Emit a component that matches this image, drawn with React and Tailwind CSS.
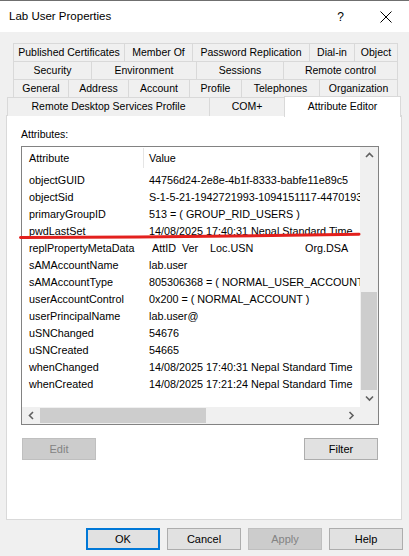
import React from 'react';

const rows = [
  ['objectGUID', '44756d24-2e8e-4b1f-8333-babfe11e89c5'],
  ['objectSid', 'S-1-5-21-1942721993-1094151117-4470193'],
  ['primaryGroupID', '513 = ( GROUP_RID_USERS )'],
  ['pwdLastSet', '14/08/2025 17:40:31 Nepal Standard Time'],
  ['replPropertyMetaData', 'META'],
  ['sAMAccountName', 'lab.user'],
  ['sAMAccountType', '805306368 = ( NORMAL_USER_ACCOUNT )'],
  ['userAccountControl', '0x200 = ( NORMAL_ACCOUNT )'],
  ['userPrincipalName', 'lab.user@'],
  ['uSNChanged', '54676'],
  ['uSNCreated', '54665'],
  ['whenChanged', '14/08/2025 17:40:31 Nepal Standard Time'],
  ['whenCreated', '14/08/2025 17:21:24 Nepal Standard Time'],
];

const Tab = ({ className, children }) => (
  <div className={`h-[19px] -ml-px first:ml-0 border border-[#d9d9d9] bg-[#f0f0f0] flex items-center justify-center text-[10.5px] text-black whitespace-nowrap ${className}`}>
    {children}
  </div>
);

const Chevron = ({ dir }) => {
  const pts = {
    up: '1,5 4.5,1.5 8,5',
    down: '1,1.5 4.5,5 8,1.5',
    left: '5,1 1.5,4.5 5,8',
    right: '1.5,1 5,4.5 1.5,8',
  }[dir];
  const vertical = dir === 'up' || dir === 'down';
  return (
    <svg width={vertical ? 9 : 7} height={vertical ? 7 : 9} viewBox={vertical ? '0 0 9 7' : '0 0 7 9'}>
      <polyline points={pts} fill="none" stroke="#606060" strokeWidth="1.6" />
    </svg>
  );
};

const Button = ({ className, children }) => (
  <div className={`w-[74px] h-[22px] flex items-center justify-center text-[11px] ${className}`}>{children}</div>
);

export default function App() {
  return (
    <div className="relative w-[409px] h-[556px] bg-[#f0f0f0] font-['Liberation_Sans',Arial,sans-serif] text-black overflow-hidden select-none">
      {/* title bar */}
      <div className="h-[32px] bg-white border-t border-[#6f6f6f] flex items-center pl-[9px]">
        <span className="text-[11.5px] flex-1">Lab User Properties</span>
        <span className="text-[12px] mr-[36px]">?</span>
        <svg width="12" height="12" viewBox="0 0 12 12" className="mr-[17px]">
          <path d="M0.5 0.5 L11.5 11.5 M11.5 0.5 L0.5 11.5" stroke="#000" strokeWidth="1" />
        </svg>
      </div>

      {/* tabs */}
      <div className="mt-[11px]">
        <div className="flex ml-[13px]">
          <Tab className="w-[112px]">Published Certificates</Tab>
          <Tab className="w-[69px]">Member Of</Tab>
          <Tab className="w-[118px]">Password Replication</Tab>
          <Tab className="w-[46px]">Dial-in</Tab>
          <Tab className="w-[44px]">Object</Tab>
        </div>
        <div className="flex ml-[13px] -mt-px">
          <Tab className="w-[79px]">Security</Tab>
          <Tab className="w-[106px]">Environment</Tab>
          <Tab className="w-[88px]">Sessions</Tab>
          <Tab className="w-[115px]">Remote control</Tab>
        </div>
        <div className="flex ml-[13px] -mt-px">
          <Tab className="w-[56px]">General</Tab>
          <Tab className="w-[61px]">Address</Tab>
          <Tab className="w-[62px]">Account</Tab>
          <Tab className="w-[53px]">Profile</Tab>
          <Tab className="w-[79px]">Telephones</Tab>
          <Tab className="w-[79px]">Organization</Tab>
        </div>
        <div className="flex items-end ml-[7px] -mt-px h-[19px] relative z-10">
          <Tab className="w-[203px] h-[18px] border-b-0">Remote Desktop Services Profile</Tab>
          <Tab className="w-[76px] h-[18px] border-b-0">COM+</Tab>
          <div className="w-[117px] h-[21px] -ml-px -mb-px border border-b-0 border-[#d9d9d9] bg-white flex items-start justify-center pt-[2px] text-[10.5px] whitespace-nowrap">
            Attribute Editor
          </div>
        </div>
      </div>

      {/* panel */}
      <div className="ml-[6px] w-[396px] h-[405px] -mt-px bg-white border border-[#d9d9d9] pl-[14px] pt-[11px]">
        <div className="h-[14px] leading-[14px] text-[10.5px]">Attributes:</div>

        <div className="mt-[5px] w-[358px] h-[279px] border border-[#828282]">
          <div className="flex h-[260px]">
            <div className="w-[338px] bg-white overflow-hidden text-[10.8px] whitespace-nowrap">
              <div className="flex h-[22px] items-center">
                <div className="w-[122px] h-[20px] pl-[7px] flex items-center border-r border-[#e5e5e5]">Attribute</div>
                <div className="pl-[5px]">Value</div>
              </div>
              <div className="pt-[3px]">
                {rows.map(([name, value]) => (
                  <div key={name} className="flex h-[17px] items-center">
                    <div className="w-[122px] shrink-0 pl-[7px]">{name}</div>
                    {value === 'META' ? (
                      <div className="flex pl-[8px]">
                        <span className="w-[30px]">AttID</span>
                        <span className="w-[28px]">Ver</span>
                        <span className="w-[95px]">Loc.USN</span>
                        <span>Org.DSA</span>
                      </div>
                    ) : (
                      <div className="pl-[5px]">{value}</div>
                    )}
                  </div>
                ))}
              </div>
            </div>
            <div className="w-[18px] bg-[#f0f0f0] flex flex-col">
              <div className="h-[17px] flex items-center justify-center"><Chevron dir="up" /></div>
              <div className="h-[128px]" />
              <div className="h-[98px] mx-[1px] bg-[#cdcdcd]" />
              <div className="flex-1 flex items-center justify-center"><Chevron dir="down" /></div>
            </div>
          </div>
          <div className="flex h-[17px] bg-[#f0f0f0]">
            <div className="w-[338px] flex items-center">
              <div className="w-[18px] flex justify-center"><Chevron dir="left" /></div>
              <div className="w-[166px] h-[15px] bg-[#cdcdcd]" />
              <div className="flex-1" />
              <div className="w-[18px] flex justify-center"><Chevron dir="right" /></div>
            </div>
            <div className="w-[18px]" />
          </div>
        </div>

        <div className="mt-[13px] w-[358px] flex justify-between px-[1px]">
          <Button className="bg-[#cccccc] border border-[#bfbfbf] text-[#838383]">Edit</Button>
          <Button className="bg-[#e1e1e1] border border-[#adadad]">Filter</Button>
        </div>
      </div>

      {/* dialog buttons */}
      <div className="mt-[8px] flex justify-end gap-[7px] pr-[6px]">
        <Button className="bg-[#e1e1e1] border-2 border-[#0078d7]">OK</Button>
        <Button className="bg-[#e1e1e1] border border-[#adadad]">Cancel</Button>
        <Button className="bg-[#cccccc] border border-[#bfbfbf] text-[#838383]">Apply</Button>
        <Button className="bg-[#e1e1e1] border border-[#adadad]">Help</Button>
      </div>

      {/* red annotation */}
      <svg className="absolute left-0 top-0 pointer-events-none" width="409" height="556">
        <path d="M20.5 237.5 Q 190 236.8 359 234.3" fill="none" stroke="#e3201d" strokeWidth="3" strokeLinecap="round" />
      </svg>
    </div>
  );
}
